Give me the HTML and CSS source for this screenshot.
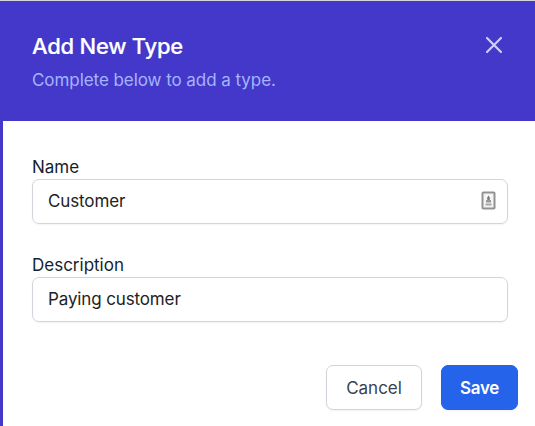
FILE: index.html
```
<!DOCTYPE html>
<html lang="en">
<head>
<meta charset="utf-8">
<title>Add New Type</title>
<link rel="stylesheet" href="styles.css">
</head>
<body>
<form class="panel">
  <header class="header">
    <div>
      <h2 class="title">Add New Type</h2>
      <p class="subtitle">Complete below to add a type.</p>
    </div>
    <svg class="close" viewBox="0 0 24 24" fill="none" stroke="currentColor" stroke-width="2.200" stroke-linecap="round"><path d="M5 5l14 14M19 5l-14 14"/></svg>
  </header>
  <main class="body">
    <div class="field">
      <label class="label">Name</label>
      <div class="input"><span>Customer</span>
        <svg class="card-icon" viewBox="0 0 16 20"><rect x="2.500" y="1.500" width="12" height="16" rx="0.800" fill="#f4f4f4" stroke="#929292" stroke-width="2"/><path d="M8.500 4.500l1.500 2.500-.5 2h-2l-.5-2z" fill="#777"/><path d="M6 9h5v2.500H6z" fill="#999"/><path d="M5.500 12.500h6v2h-6z" fill="#aaa"/></svg>
      </div>
    </div>
    <div class="field">
      <label class="label">Description</label>
      <div class="input"><span>Paying customer</span></div>
    </div>
    <div class="actions">
      <button type="button" class="button cancel">Cancel</button>
      <button type="button" class="button save">Save</button>
    </div>
  </main>
</form>
</body>
</html>
```
FILE: styles.css
```
* { box-sizing: border-box; }
body { margin: 0; font-family: Inter, sans-serif; font-size: 17px; color: #161e2e; }
.panel { height: 426px; border-top: 1px solid #d1d5db; overflow: hidden; }
.header { height: 120px; padding: 29px 29px 0 32px; background: #4338ca; color: #fff; display: flex; justify-content: space-between; }
.title { margin: 0; font-size: 22px; line-height: 32px; font-weight: 500; letter-spacing: -0.25px; -webkit-text-stroke: 0.2px currentColor; }
.subtitle { margin: 5px 0 0; line-height: 26px; color: #a5b4fc; letter-spacing: -0.06px; }
.close { width: 24px; height: 24px; margin-top: 3px; color: #c7d2fe; }
.body { height: 305px; border-left: 3px solid #4338ca; padding: 34px 17px 0 29px; background: #fff; }
.field { margin: 0 10px 29px 0; }
.label { display: block; height: 24px; line-height: 25px; }
.input { height: 45px; display: flex; align-items: center; justify-content: space-between; padding: 0 11px 1px 15px; border: 1px solid #d1d5db; border-radius: 7px; box-shadow: 0 1px 2px rgba(0,0,0,.05); color: #222; letter-spacing: -0.13px; }
.card-icon { width: 16px; height: 20px; }
.actions { display: flex; justify-content: flex-end; gap: 19px; margin-top: 43px; }
.button { height: 45px; border: 1px solid #d1d5db; border-radius: 7px; background: #fff; font: 400 17px Inter, sans-serif; color: #374151; box-shadow: 0 1px 2px rgba(0,0,0,.05); padding: 0; }
.cancel { width: 96px; }
.save { width: 77px; background: #2563eb; border-color: #2563eb; color: #fff; font-weight: 600; letter-spacing: -0.3px; }
```
